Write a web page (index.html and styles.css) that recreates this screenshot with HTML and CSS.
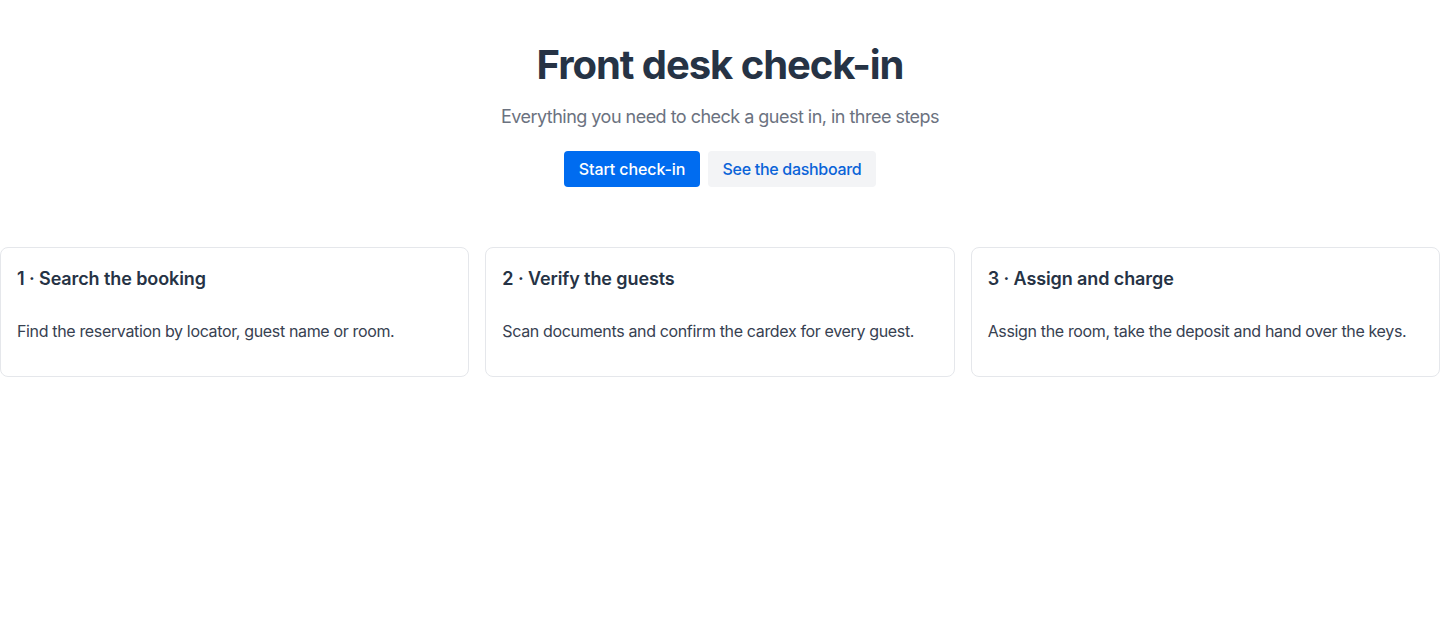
FILE: index.html
```
<!DOCTYPE html>
<html lang="en">
<head>
<meta charset="utf-8">
<title>Front desk check-in</title>
<link rel="stylesheet" href="styles.css">
</head>
<body>
<header class="hero">
  <h1 class="hero-title">Front desk check-in</h1>
  <p class="hero-sub">Everything you need to check a guest in, in three steps</p>
  <div class="actions">
    <button class="btn btn-primary" type="button">Start check-in</button>
    <button class="btn btn-secondary" type="button">See the dashboard</button>
  </div>
</header>
<main class="steps">
  <section class="card">
    <h3 class="card-title">1 · Search the booking</h3>
    <p class="card-text">Find the reservation by locator, guest name or room.</p>
  </section>
  <section class="card">
    <h3 class="card-title">2 · Verify the guests</h3>
    <p class="card-text">Scan documents and confirm the cardex for every guest.</p>
  </section>
  <section class="card">
    <h3 class="card-title">3 · Assign and charge</h3>
    <p class="card-text">Assign the room, take the deposit and hand over the keys.</p>
  </section>
</main>
</body>
</html>
```
FILE: styles.css
```
* { box-sizing: border-box; }

body {
  margin: 0;
  font-family: Inter, "Noto Sans", sans-serif;
  color: #263345;
  background: #ffffff;
}

.hero {
  display: flex;
  flex-direction: column;
  align-items: center;
  padding-top: 41px;
}

.hero-title {
  margin: 0;
  font-size: 40px;
  line-height: 48px;
  font-weight: 700;
  color: #263345;
  letter-spacing: -1.05px;
}

.hero-sub {
  margin: 14px 0 0;
  font-size: 18px;
  line-height: 28px;
  color: #6b7280;
  letter-spacing: -0.52px;
}

.actions {
  display: flex;
  gap: 8px;
  margin-top: 20px;
}

.btn {
  height: 36px;
  padding: 0 14px;
  border: none;
  border-radius: 4px;
  font-family: inherit;
  font-size: 16px;
  font-weight: 500;
  cursor: pointer;
}

.btn-primary {
  width: 136px;
  background: #006cf0;
  color: #ffffff;
  letter-spacing: -0.1px;
}

.btn-secondary {
  width: 168px;
  background: #f3f4f6;
  color: #0a63d8;
  letter-spacing: -0.3px;
}

.steps {
  display: grid;
  grid-template-columns: repeat(3, 1fr);
  gap: 16px;
  margin-top: 60px;
}

.card {
  border: 1px solid #e5e7eb;
  border-radius: 8px;
  padding: 17px 16px 17px;
}

.card-title {
  margin: 0;
  font-size: 18px;
  line-height: 28px;
  font-weight: 600;
  color: #263345;
  letter-spacing: -0.1px;
}

.card-text {
  margin: 26px 0 16px;
  font-size: 16px;
  line-height: 24px;
  color: #374151;
  letter-spacing: -0.35px;
}
```
